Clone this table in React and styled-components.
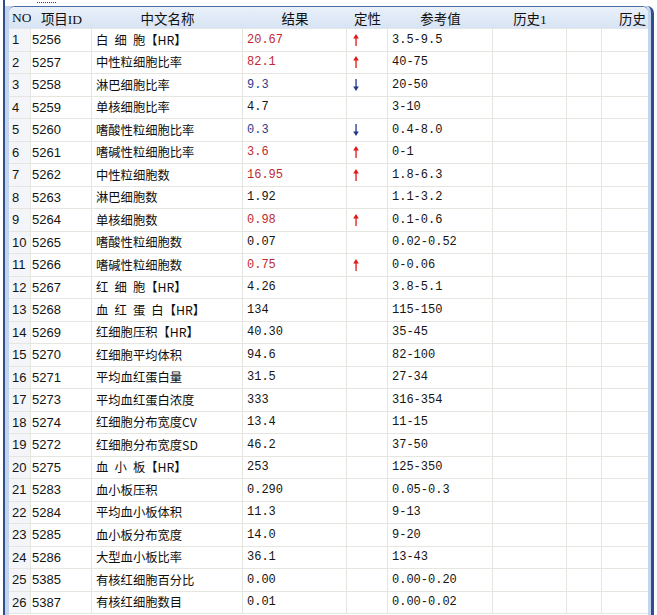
import React from "react";
import styled, { createGlobalStyle } from "styled-components";

const Global = createGlobalStyle`
  html, body { margin: 0; padding: 0; background: #fff; }
  body { font-family: "Noto Sans CJK SC", "Liberation Sans", sans-serif; }
`;

const COLS = "22px 61px 151px 104px 41px 105px 74px 35px 76px";

const Page = styled.div`
  width: 657px;
  height: 615px;
  overflow: hidden;
  background: #fff;
  padding-left: 3px;
  box-sizing: border-box;
`;

const Frame = styled.div`
  width: 651px;
  height: 100%;
  box-sizing: border-box;
  border-left: 2px solid #2f4f8c;
  display: flex;
  flex-direction: column;
`;

const TopStrip = styled.div`
  height: 6px;
  flex: none;
  display: flex;
  align-items: flex-start;
`;

const Dots = styled.div`
  margin-left: ${(p) => p.$left}px;
  margin-top: 2px;
  width: ${(p) => p.$w}px;
  border-top: 1px dotted #444;
`;

const Panel = styled.div`
  flex: 1;
  min-height: 0;
  background: #c3d4ee;
  padding: 0 3px 0 4px;
  border-right: 3px solid #2f4f8c;
  border-top-right-radius: 7px;
  display: flex;
  flex-direction: column;
`;

const Grid = styled.div`
  flex: 1;
  overflow: hidden;
  background: #fff;
  border-top: 1px solid #4b6aa6;
  border-top-left-radius: 6px;
  border-top-right-radius: 6px;
`;

const HeaderRow = styled.div`
  display: grid;
  grid-template-columns: ${COLS};
  height: 22px;
  background: linear-gradient(#e9f0fa, #d8e4f4);
  border-bottom: 1px solid #e3e6ea;
  box-sizing: border-box;
`;

const HeadCell = styled.div`
  display: flex;
  align-items: center;
  justify-content: ${(p) =>
    p.$align === "left" ? "flex-start" : p.$align === "end" ? "flex-end" : "center"};
  padding-left: ${(p) => (p.$align === "left" ? 3 : 0)}px;
  padding-right: ${(p) => (p.$align === "end" ? 32 : 0)}px;
  font-family: "Liberation Serif", "Noto Sans CJK SC", serif;
  font-size: 13.5px;
  color: #111;
  white-space: nowrap;
  overflow: hidden;
`;

const Row = styled.div`
  display: grid;
  grid-template-columns: ${COLS};
  height: 22.5px;
`;

const Cell = styled.div`
  display: flex;
  align-items: center;
  box-sizing: border-box;
  border-right: 1px solid #e6e6e1;
  border-bottom: 1px solid #e6e6e1;
  padding-left: ${(p) => p.$pad ?? 4}px;
  white-space: pre;
  overflow: hidden;
  color: #141414;
`;

const NoCell = styled(Cell)`
  background: #f3f5f9;
  font-family: "Liberation Sans", sans-serif;
  font-size: 13px;
`;

const IdCell = styled(Cell)`
  font-family: "Liberation Sans", sans-serif;
  font-size: 13px;
`;

const NameCell = styled(Cell)`
  font-family: "Noto Sans CJK SC", sans-serif;
  font-size: 12.3px;
  color: #0d0d0d;
`;

const MonoCell = styled(Cell)`
  font-family: "Liberation Mono", monospace;
  font-size: 12px;
  color: ${(p) => (p.$tone === "up" ? "#bf2a32" : p.$tone === "down" ? "#2b3c8c" : "#141414")};
`;

const Arrow = ({ dir }) => {
  const color = dir === "up" ? "#e01818" : "#23368c";
  return (
    <svg width="6" height="12" viewBox="0 0 6 12" style={{ display: "block" }}>
      {dir === "up" ? (
        <>
          <path d="M3 0 L5.8 4.5 L0.2 4.5 Z" fill={color} />
          <rect x="2.4" y="4" width="1.3" height="8" fill={color} />
        </>
      ) : (
        <>
          <rect x="2.4" y="0" width="1.3" height="8" fill={color} />
          <path d="M3 12 L5.8 7.5 L0.2 7.5 Z" fill={color} />
        </>
      )}
    </svg>
  );
};

const S = "\u2002";

const rows = [
  ["5256", `白${S}细${S}胞【HR】`, "20.67", "up", "3.5-9.5"],
  ["5257", "中性粒细胞比率", "82.1", "up", "40-75"],
  ["5258", "淋巴细胞比率", "9.3", "down", "20-50"],
  ["5259", "单核细胞比率", "4.7", "", "3-10"],
  ["5260", "嗜酸性粒细胞比率", "0.3", "down", "0.4-8.0"],
  ["5261", "嗜碱性粒细胞比率", "3.6", "up", "0-1"],
  ["5262", "中性粒细胞数", "16.95", "up", "1.8-6.3"],
  ["5263", "淋巴细胞数", "1.92", "", "1.1-3.2"],
  ["5264", "单核细胞数", "0.98", "up", "0.1-0.6"],
  ["5265", "嗜酸性粒细胞数", "0.07", "", "0.02-0.52"],
  ["5266", "嗜碱性粒细胞数", "0.75", "up", "0-0.06"],
  ["5267", `红${S}细${S}胞【HR】`, "4.26", "", "3.8-5.1"],
  ["5268", `血${S}红${S}蛋${S}白【HR】`, "134", "", "115-150"],
  ["5269", "红细胞压积【HR】", "40.30", "", "35-45"],
  ["5270", "红细胞平均体积", "94.6", "", "82-100"],
  ["5271", "平均血红蛋白量", "31.5", "", "27-34"],
  ["5273", "平均血红蛋白浓度", "333", "", "316-354"],
  ["5274", "红细胞分布宽度CV", "13.4", "", "11-15"],
  ["5272", "红细胞分布宽度SD", "46.2", "", "37-50"],
  ["5275", `血${S}小${S}板【HR】`, "253", "", "125-350"],
  ["5283", "血小板压积", "0.290", "", "0.05-0.3"],
  ["5284", "平均血小板体积", "11.3", "", "9-13"],
  ["5285", "血小板分布宽度", "14.0", "", "9-20"],
  ["5286", "大型血小板比率", "36.1", "", "13-43"],
  ["5385", "有核红细胞百分比", "0.00", "", "0.00-0.20"],
  ["5387", "有核红细胞数目", "0.01", "", "0.00-0.02"],
];

export default function App() {
  return (
    <>
      <Global />
      <Page>
        <Frame>
          <TopStrip>
            <Dots $left={32} $w={19} />
          </TopStrip>
          <Panel>
            <Grid>
              <HeaderRow>
                <HeadCell $align="left">NO</HeadCell>
                <HeadCell>项目ID</HeadCell>
                <HeadCell>中文名称</HeadCell>
                <HeadCell>结果</HeadCell>
                <HeadCell>定性</HeadCell>
                <HeadCell>参考值</HeadCell>
                <HeadCell>历史1</HeadCell>
                <HeadCell />
                <HeadCell $align="end">历史</HeadCell>
              </HeaderRow>
              {rows.map(([id, name, val, flag, ref], i) => (
                <Row key={id + i}>
                  <NoCell $pad={3}>{i + 1}</NoCell>
                  <IdCell $pad={1}>{id}</IdCell>
                  <NameCell>{name}</NameCell>
                  <MonoCell $tone={flag}>{val}</MonoCell>
                  <Cell $pad={6}>{flag && <Arrow dir={flag} />}</Cell>
                  <MonoCell>{ref}</MonoCell>
                  <Cell />
                  <Cell />
                  <Cell />
                </Row>
              ))}
            </Grid>
          </Panel>
        </Frame>
      </Page>
    </>
  );
}
